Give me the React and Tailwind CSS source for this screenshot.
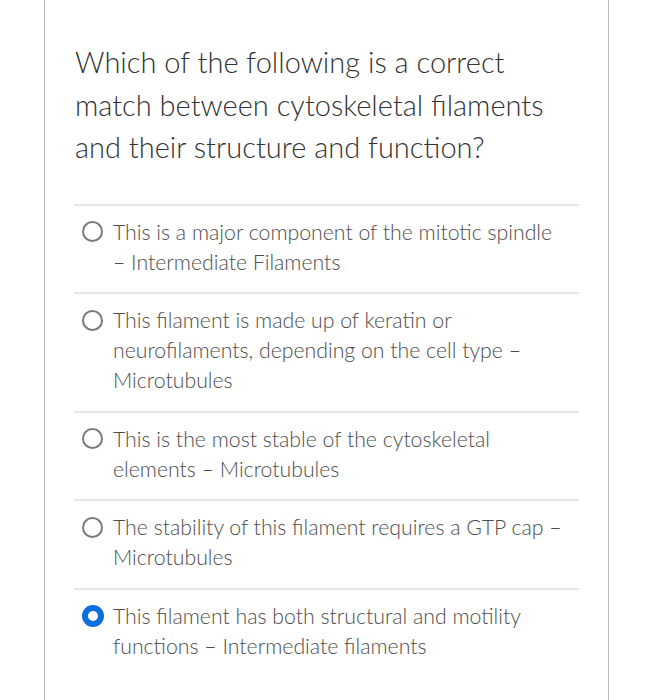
export default function App() {
  const options = [
    ["This is a major component of the mitotic spindle", "– Intermediate Filaments"],
    ["This filament is made up of keratin or", "neurofilaments, depending on the cell type –", "Microtubules"],
    ["This is the most stable of the cytoskeletal", "elements – Microtubules"],
    ["The stability of this filament requires a GTP cap –", "Microtubules"],
    ["This filament has both structural and motility", "functions – Intermediate filaments"],
  ];
  return (
    <div className="min-h-[700px] bg-white" style={{ fontFamily: "Lato, 'Open Sans', sans-serif" }}>
      <div className="ml-[44px] w-[565px] min-h-[700px] border-l border-r border-[#b8b8b8] px-[29px]">
        <div className="pt-[41px] text-[29px] font-light leading-[42.5px] text-[#333333] pl-[1px]">
          <div>Which of the following is a correct</div>
          <div>match between cytoskeletal filaments</div>
          <div>and their structure and function?</div>
        </div>
        <div className="mt-[35px]">
          {options.map((lines, i) => {
            const selected = i === 4;
            return (
              <div key={i} className="border-t-2 border-[#e6e6e6] pt-[11px] pb-[15.5px] flex">
                <div className="ml-[8px] w-[22px] h-[30px] flex items-center shrink-0">
                  {selected ? (
                    <div className="w-[22px] h-[22px] rounded-full border-[6px] border-[#0b6fe0] bg-white" />
                  ) : (
                    <div className="w-[21px] h-[21px] rounded-full border-2 border-[#7a7a7a] bg-white" />
                  )}
                </div>
                <div className="ml-[9px] text-[21.25px] font-light leading-[30px] text-[#4d4d4d]">
                  {lines.map((l, j) => (
                    <div key={j}>{l}</div>
                  ))}
                </div>
              </div>
            );
          })}
        </div>
      </div>
    </div>
  );
}
